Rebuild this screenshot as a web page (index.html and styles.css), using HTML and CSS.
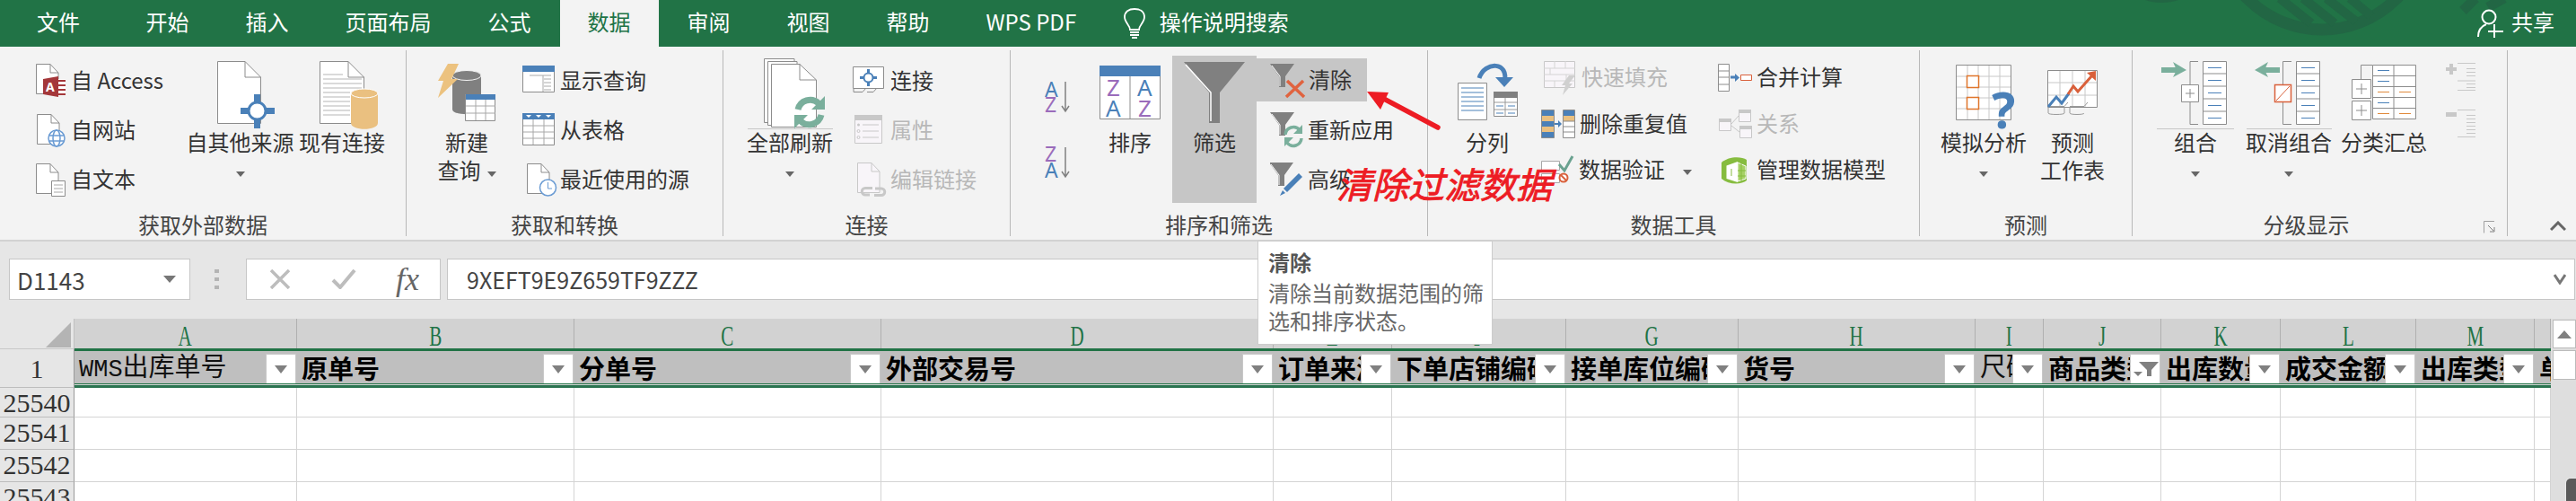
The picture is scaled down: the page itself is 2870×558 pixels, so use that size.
FILE: index.html
```html
<!DOCTYPE html>
<html lang="zh-CN">
<head>
<meta charset="utf-8">
<title>数据 - 筛选</title>
<link rel="stylesheet" href="styles.css">
</head>
<body>
<div class="app">
  <header class="topbar">
    <svg class="deco" width="2870" height="52" viewBox="0 0 2870 52">
      <circle cx="2587" cy="-84" r="117" fill="none" stroke="#226644" stroke-width="13"/>
      <path d="M2540 -2L2575 26M2566 -2L2601 26M2592 -2L2625 24M2618 -2L2642 18" stroke="#226644" stroke-width="10" fill="none"/>
      <path d="M2390 0C2400 4 2416 4 2427 0Z" fill="#226644"/>
      <path d="M2744 12L2758 -2M2772 8L2790 -2" stroke="#226644" stroke-width="11" fill="none"/>
    </svg>
    <nav class="tabs">
      <span class="tab first">文件</span><span class="tab">开始</span><span class="tab">插入</span><span class="tab">页面布局</span><span class="tab">公式</span><span class="tab on">数据</span><span class="tab">审阅</span><span class="tab">视图</span><span class="tab">帮助</span><span class="tab">WPS PDF</span>
      <span class="search">
        <svg width="26" height="34" viewBox="0 0 26 34"><path d="M8 24C8 19 2 16 2 10C2 4 6.500 1 13 1C19.500 1 24 4 24 10C24 16 18 19 18 24Z" fill="none" stroke="#fff" stroke-width="1.800"/><path d="M8 27H18M8 30H18" stroke="#fff" stroke-width="2"/><path d="M10 33H16" stroke="#fff" stroke-width="2"/></svg>
        <span>操作说明搜索</span>
      </span>
    </nav>
    <div class="share">
      <svg width="30" height="32" viewBox="0 0 30 32"><circle cx="13" cy="9" r="7.500" fill="none" stroke="#fff" stroke-width="2"/><path d="M1 31C1 23 5 19 10 17" fill="none" stroke="#fff" stroke-width="2"/><path d="M19 17V32M12 25H29" stroke="#fff" stroke-width="2"/></svg>
      <span>共享</span>
    </div>
  </header>

  <section class="ribbon">
    <!-- 获取外部数据 -->
    <div class="grp g1">
      <div class="body">
        <div class="stack s1">
          <div class="r"><svg width="39" height="40" viewBox="40 70 39 40"><path class="doc" d="M40.500 71.500H56L65 81V104.500H40.500Z"/><path class="fold" d="M56 71.500V81H65"/><path d="M60 88H73V106H60Z" fill="#fff"/><path d="M62 90H73M62 95H73M62 100H73M62 105H73" stroke="#a4373a" stroke-width="2"/><path d="M48 88L65 85V108L48 105Z" fill="#a4373a"/><text class="ti" x="51" y="102" font-size="14" fill="#fff">A</text></svg><span>自 Access</span></div>
          <div class="r"><svg width="39" height="40" viewBox="40 125 39 40"><path class="doc" d="M41.500 127.500H57L66 137V160.500H41.500Z"/><path class="fold" d="M57 127.500V137H66"/><circle cx="63" cy="154" r="9" fill="#fff" stroke="#6a9bd3" stroke-width="1.500"/><ellipse cx="63" cy="154" rx="4" ry="9" fill="none" stroke="#6a9bd3" stroke-width="1.500"/><path d="M54 151H72M54 157H72" stroke="#6a9bd3" stroke-width="1.500"/></svg><span>自网站</span></div>
          <div class="r"><svg width="39" height="40" viewBox="40 180 39 40"><path class="doc" d="M40.500 182.500H56L65 192V215.500H40.500Z"/><path class="fold" d="M56 182.500V192H65"/><path class="doc" d="M57.500 201.500H72.500V218.500H57.500Z"/><path d="M60 206H70M60 210H70M60 214H70" stroke="#a8a8a8"/></svg><span>自文本</span></div>
        </div>
        <div class="big w125">
          <svg width="125" height="88" viewBox="205 56 125 88"><path class="doc" d="M242.500 68.500H273L290.500 86V137.500H242.500Z"/><path class="fold" d="M273 68.500V86H290.500"/><path d="M283 105H290V143H283ZM268 120H306V127H268Z" fill="#4a80b8"/><circle cx="286.500" cy="123.500" r="9.500" fill="#fff" stroke="#4a80b8" stroke-width="3"/></svg>
          <div class="lb">自其他来源</div><div class="lb"><i class="car"></i></div>
        </div>
        <div class="big w100 m1">
          <svg width="100" height="88" viewBox="331 56 100 88"><path class="doc" d="M356.500 68.500H388L405.500 86V137.500H356.500Z"/><path class="fold" d="M388 68.500V86H405.500"/><path d="M360 83H382M360 88H403M360 93H403M360 98H403M360 103H390M360 108H390M360 113H390M360 118H390M360 123H390M360 128H390" stroke="#b5b5b5"/><path d="M391 104V137C391 146 421 146 421 137V104Z" fill="#eac080"/><ellipse cx="406" cy="104" rx="15" ry="5" fill="#eac080" stroke="#fff"/></svg>
          <div class="lb">现有连接</div>
        </div>
      </div>
      <div class="cap">获取外部数据</div>
    </div>

    <!-- 获取和转换 -->
    <div class="grp g2">
      <div class="body">
        <div class="big w90 m22">
          <svg width="90" height="88" viewBox="475 56 90 88"><path d="M504 84V122C504 129 536 129 536 122V84Z" fill="#808080"/><ellipse cx="520" cy="84" rx="16" ry="5.500" fill="#808080" stroke="#f3f3f3"/><path d="M499 71H511L503 88H510L488 109L494 90H488Z" fill="#ecc27f"/><path d="M518.500 105.500H551.500V134.500H518.500Z" fill="#fff" stroke="#8c8c8c"/><path d="M519 105H552V111H519Z" fill="#4a80b8"/><path d="M530 111V134M541 111V134M519 118H552M519 126H552" stroke="#a8a8a8"/></svg>
          <div class="lb">新建</div><div class="lb">查询<i class="car ml"></i></div>
        </div>
        <div class="stack s2">
          <div class="r"><svg width="42" height="40" viewBox="582 70 42 40"><path d="M582.500 73.500H617.500V102.500H582.500Z" fill="#fff" stroke="#8c8c8c"/><path d="M582 73H618V80H582Z" fill="#4a80b8"/><path d="M590 84H614M606 88H614M606 92H614M606 96H614M606 100H614M605 84V102" stroke="#aaa"/></svg><span>显示查询</span></div>
          <div class="r"><svg width="42" height="40" viewBox="582 125 42 40"><path d="M582.500 126.500H617.500V161.500H582.500Z" fill="#fff" stroke="#8c8c8c"/><path d="M582 126H618V133H582Z" fill="#4a80b8"/><path d="M586 128H592L589 131ZM597 128H603L600 131ZM608 128H614L611 131Z" fill="#fff"/><path d="M594 133V161M606 133V161M583 140H617M583 147H617M583 154H617" stroke="#a8a8a8"/></svg><span>从表格</span></div>
          <div class="r"><svg width="42" height="40" viewBox="582 180 42 40"><path class="doc" d="M587.500 182.500H603L612 192V215.500H587.500Z"/><path class="fold" d="M603 182.500V192H612"/><circle cx="610.500" cy="209" r="9" fill="#fff" stroke="#6a9bd3" stroke-width="1.500"/><path d="M610.500 203V210H615" fill="none" stroke="#6a9bd3"/></svg><span>最近使用的源</span></div>
        </div>
      </div>
      <div class="cap">获取和转换</div>
    </div>

    <!-- 连接 -->
    <div class="grp g3">
      <div class="body">
        <div class="big w100 m24">
          <svg width="100" height="88" viewBox="830 56 100 88"><path class="doc" d="M851.500 65.500H885V136.500H851.500Z"/><path class="doc" d="M855.500 68.500H888V139.500H855.500Z"/><path class="doc" d="M859.500 71.500H891L909.500 89V141.500H859.500Z"/><path class="fold" d="M891 71.500V89H909.500"/><g fill="none" stroke="#7aaf9c" stroke-width="7"><path d="M889 122A14 14 0 0 1 912 115"/><path d="M915 128A14 14 0 0 1 892 135"/></g><path d="M919 107V122H904ZM885 143V128H900Z" fill="#7aaf9c"/><path d="M833 143.500H928" stroke="#c6c6c6"/></svg>
          <div class="lb">全部刷新</div><div class="lb"><i class="car"></i></div>
        </div>
        <div class="stack s3">
          <div class="r"><svg width="42" height="40" viewBox="950 70 42 40"><path d="M950.500 74.500H984.500V98.500H950.500Z" fill="#fff" stroke="#8c8c8c"/><path d="M954 102.500H961L965 98M966 102.500H973L977 98M951 99V102.500H954" fill="none" stroke="#8c8c8c"/><path d="M966 77H969V96H966ZM958 85H977V88H958Z" fill="#4a80b8"/><circle cx="967.500" cy="86.500" r="5" fill="#fff" stroke="#4a80b8" stroke-width="2"/></svg><span>连接</span></div>
          <div class="r dis"><svg width="42" height="40" viewBox="950 125 42 40"><path d="M952.500 128.500H982.500V159.500H952.500Z" fill="#f8f5f9" stroke="#c8c8c8"/><path d="M952 128H983V134H952Z" fill="#c8c8c8"/><path d="M961 139H979M961 146H979M961 153H979" stroke="#c8c8c8"/><circle cx="956.500" cy="139" r="1.500" fill="#c8c8c8"/><circle cx="956.500" cy="146" r="1.500" fill="none" stroke="#c8c8c8"/><circle cx="956.500" cy="153" r="1.500" fill="none" stroke="#c8c8c8"/></svg><span>属性</span></div>
          <div class="r dis"><svg width="42" height="40" viewBox="950 180 42 40"><path d="M955.500 181.500H971L980 191V214.500H955.500Z" fill="#f8f5f9" stroke="#c8c8c8"/><path d="M971 181.500V191H980" fill="none" stroke="#c8c8c8"/><path d="M969 217H964A3.500 3.500 0 0 1 964 209.500H972M975 210H982A3.500 3.500 0 0 1 982 217.500H974" fill="none" stroke="#c8c8c8" stroke-width="3"/></svg><span>编辑链接</span></div>
        </div>
      </div>
      <div class="cap">连接</div>
    </div>

    <!-- 排序和筛选 -->
    <div class="grp g4">
      <div class="body">
        <div class="sorts">
          <svg width="30" height="36" viewBox="1164 90 30 36"><text class="tt" x="1164" y="108" font-size="23" fill="#4a80b8">A</text><text class="tt" x="1164" y="125" font-size="23" fill="#9a6cbb">Z</text><path d="M1187 91V123M1183 118L1187 124L1191 118" fill="none" stroke="#808080" stroke-width="1.500"/></svg>
          <svg width="30" height="36" viewBox="1164 163 30 36"><text class="tt" x="1164" y="180" font-size="23" fill="#9a6cbb">Z</text><text class="tt" x="1164" y="198" font-size="23" fill="#4a80b8">A</text><path d="M1187 164V196M1183 191L1187 197L1191 191" fill="none" stroke="#808080" stroke-width="1.500"/></svg>
        </div>
        <div class="big w80 m15">
          <svg width="80" height="88" viewBox="1219 56 80 88"><path d="M1225.500 73.500H1292.500V132.500H1225.500Z" fill="#fff" stroke="#8c8c8c"/><path d="M1225 73H1293V85H1225Z" fill="#4a80b8"/><path d="M1259 85V133" stroke="#8c8c8c"/><text class="tt" x="1233" y="107" font-size="26" fill="#9a6cbb">Z</text><text class="tt" x="1267" y="107" font-size="26" fill="#4a80b8">A</text><text class="tt" x="1232" y="130" font-size="26" fill="#4a80b8">A</text><text class="tt" x="1268" y="130" font-size="26" fill="#9a6cbb">Z</text></svg>
          <div class="lb">排序</div>
        </div>
        <div class="big filter">
          <svg width="94" height="82" viewBox="1306 62 94 82"><path d="M1319 69H1387L1359 103V137H1347V103Z" fill="#808080"/><path d="M1321 72L1349 103V135" fill="none" stroke="#fff" stroke-width="1.500"/></svg>
          <div class="lb">筛选</div>
        </div>
        <div class="stack s4">
          <div class="r hl"><svg width="43" height="44" viewBox="1415 67 43 44"><path d="M1415 71H1442L1432 85V97H1425V85Z" fill="#808080"/><path d="M1417 73L1426 85V96" fill="none" stroke="#fff"/><path d="M1433 108L1452 90M1434 90L1453 108" stroke="#e0633f" stroke-width="3.500" fill="none"/></svg><span>清除</span></div>
          <div class="r"><svg width="42" height="44" viewBox="1416 125 42 44"><path d="M1416 127H1443L1433 141V153H1426V141Z" fill="#808080"/><path d="M1418 129L1427 141V152" fill="none" stroke="#fff"/><g fill="none" stroke="#7aaf9c" stroke-width="3.500"><path d="M1433 152A9 9 0 0 1 1449 147"/><path d="M1451 156A9 9 0 0 1 1435 161"/></g><path d="M1452 141V151H1442ZM1432 165V155H1442Z" fill="#7aaf9c"/></svg><span>重新应用</span></div>
          <div class="r"><svg width="42" height="44" viewBox="1416 178 42 44"><path d="M1415 181H1442L1432 195V207H1425V195Z" fill="#808080"/><path d="M1417 183L1426 195V206" fill="none" stroke="#fff"/><path d="M1431 210L1448 193L1452 197L1435 214Z" fill="#4a80b8"/><path d="M1430 212L1433 215L1427 218Z" fill="#4a80b8"/></svg><span>高级</span></div>
        </div>
      </div>
      <div class="cap">排序和筛选</div>
    </div>

    <!-- 数据工具 -->
    <div class="grp g5">
      <div class="body">
        <div class="big w90 m21">
          <svg width="90" height="88" viewBox="1612 56 90 88"><path d="M1648 87C1654 68 1682 68 1676 92" fill="none" stroke="#4a80b8" stroke-width="5"/><path d="M1666 86H1686L1676 97Z" fill="#4a80b8"/><path d="M1624.500 92.500H1656.500V133.500H1624.500Z" fill="#fff" stroke="#8c8c8c"/><path d="M1628 98H1653M1628 103H1653M1628 108H1653M1628 113H1653M1628 118H1653M1628 123H1653" stroke="#4a80b8"/><path d="M1664.500 102.500H1690.500V129.500H1664.500Z" fill="#fff" stroke="#8c8c8c"/><path d="M1664 102H1691V109H1664Z" fill="#808080"/><path d="M1677 109V130M1665 114H1690M1665 122H1690" stroke="#9a9a9a"/><path d="M1667 118H1675M1680 118H1688M1667 126H1675M1680 126H1688" stroke="#4a80b8"/></svg>
          <div class="lb">分列</div>
        </div>
        <div class="stack s5">
          <div class="r dis"><svg width="45" height="44" viewBox="1717 65 45 44"><path d="M1720.500 68.500H1754.500V97.500H1720.500Z" fill="#f8f5f9" stroke="#c8c8c8"/><path d="M1720 76H1755M1720 83H1755M1720 90H1755M1732 68V76M1744 68V76M1727 76V83M1745 83V90M1732 90V97" stroke="#d4d4d4"/><path d="M1748 84H1755L1748 93H1752L1741 106L1744 95H1740Z" fill="#d0d0d0"/></svg><span>快速填充</span></div>
          <div class="r"><svg width="43" height="36" viewBox="1719 120 43 36"><path d="M1719.500 122.500H1733.500V153.500H1719.500Z" fill="#4a80b8" stroke="#8c8c8c"/><path d="M1720 129H1733V135H1720ZM1720 141H1733V147H1720Z" fill="#eac080"/><path d="M1743.500 122.500H1756.500V153.500H1743.500Z" fill="#fff" stroke="#8c8c8c"/><path d="M1744 123H1756V129H1744Z" fill="#4a80b8"/><path d="M1744 129H1756V135H1744Z" fill="#eac080"/><path d="M1744 135H1756M1744 141H1756M1744 147H1756" stroke="#8c8c8c"/><path d="M1734 138H1739" stroke="#4a80b8" stroke-width="2"/><path d="M1738 134L1742 138L1738 142Z" fill="#4a80b8"/></svg><span>删除重复值</span></div>
          <div class="r"><svg width="42" height="40" viewBox="1717 170 42 40"><path d="M1717.500 179.500H1737.500V189.500H1717.500Z" fill="#fff" stroke="#a8a8a8"/><path d="M1717.500 193.500H1737.500V203.500H1717.500Z" fill="#fff" stroke="#a8a8a8"/><path d="M1737 183L1743 190L1752 174" fill="none" stroke="#6aa290" stroke-width="3"/><circle cx="1742" cy="198" r="4.500" fill="#fff" stroke="#d9603b" stroke-width="2"/><path d="M1739 195L1745 201" stroke="#d9603b" stroke-width="2"/></svg><span>数据验证</span><i class="car ml2"></i></div>
        </div>
        <div class="stack s5b">
          <div class="r"><svg width="43" height="36" viewBox="1914 68 43 36"><path d="M1914.500 70.500H1926.500V100.500H1914.500Z" fill="#fff" stroke="#8c8c8c"/><path d="M1915 78H1926M1915 85H1926M1915 93H1926" stroke="#8c8c8c"/><path d="M1928 85H1934" stroke="#4a80b8" stroke-width="3"/><path d="M1933 81L1938 85.500L1933 90Z" fill="#4a80b8"/><path d="M1939.500 82.500H1951.500V88.500H1939.500Z" fill="#fff" stroke="#d9603b"/></svg><span>合并计算</span></div>
          <div class="r dis"><svg width="43" height="36" viewBox="1914 118 43 36"><path d="M1915.500 130.500H1928.500V143.500H1915.500ZM1937.500 120.500H1950.500V133.500H1937.500ZM1938.500 138.500H1951.500V151.500H1938.500Z" fill="#f8f5f9" stroke="#c8c8c8"/><path d="M1915 130H1929V134H1915ZM1937 120H1951V124H1937ZM1938 138H1952V142H1938Z" fill="#c8c8c8"/><path d="M1929 136L1937 127M1929 138L1938 145" stroke="#c8c8c8" fill="none"/></svg><span>关系</span></div>
          <div class="r"><svg width="43" height="36" viewBox="1914 172 43 36"><path d="M1918 181C1926 174 1940 174 1946 178V201C1940 206 1926 206 1918 199Z" fill="#86bc3f"/><path d="M1923.500 184.500L1936 180V203L1923.500 199Z" fill="#fff"/><path d="M1936 181L1945 185V199L1936 202Z" fill="#a6d166" stroke="#fff"/><path d="M1929 188V196M1940 182V201M1936 190H1945M1936 196H1945" stroke="#86bc3f"/></svg><span>管理数据模型</span></div>
        </div>
      </div>
      <div class="cap">数据工具</div>
    </div>

    <!-- 预测 -->
    <div class="grp g6">
      <div class="body">
        <div class="big w100 m21">
          <svg width="100" height="88" viewBox="2160 56 100 88"><path d="M2179.500 72.500H2240.500V133.500H2179.500Z" fill="#fff" stroke="#8c8c8c"/><path d="M2192 73V133M2204 73V133M2216 73V133M2228 73V133M2180 85H2240M2180 97H2240M2180 109H2240M2180 121H2240" stroke="#c8c8c8"/><path d="M2191.500 84.500H2204.500V97.500H2191.500ZM2191.500 108.500H2204.500V121.500H2191.500Z" fill="#fff" stroke="#e0762c" stroke-width="1.500"/><text class="qm" x="2219" y="143" font-size="55" fill="#4a80b8">?</text></svg>
          <div class="lb">模拟分析</div><div class="lb"><i class="car"></i></div>
        </div>
        <div class="big w80 m9">
          <svg width="80" height="88" viewBox="2269 56 80 88"><path d="M2281.500 78.500H2336.500V119.500H2281.500Z" fill="#fff" stroke="#8c8c8c"/><path d="M2295 79V119M2309 79V119M2323 79V119M2282 92H2336M2282 106H2336" stroke="#c8c8c8"/><path d="M2284 118.500H2300L2304 114M2306 118.500H2322L2326 114M2282 119V126C2282 128 2300 128 2300 126L2300 119M2306 119V126C2306 128 2322 128 2322 126" fill="none" stroke="#9a9a9a"/><path d="M2282 119L2291 108L2297 115L2305 104" fill="none" stroke="#4a80b8" stroke-width="3"/><path d="M2304 105L2310 96L2315 102L2331 84" fill="none" stroke="#d9603b" stroke-width="3"/><path d="M2325 81L2335 79L2335 90Z" fill="#d9603b"/></svg>
          <div class="lb">预测</div><div class="lb">工作表</div>
        </div>
      </div>
      <div class="cap">预测</div>
    </div>

    <!-- 分级显示 -->
    <div class="grp g7">
      <div class="body">
        <div class="big w86 m27">
          <svg width="86" height="88" viewBox="2403 56 86 88"><path d="M2408 75H2428V81H2408Z" fill="#7aaf9c"/><path d="M2421 69L2436 78L2421 86L2425 78Z" fill="#7aaf9c"/><path d="M2449 68.500H2440V138.500H2449" fill="none" stroke="#8c8c8c"/><path d="M2430.500 94.500H2449.500V113.500H2430.500Z" fill="#fff" stroke="#8c8c8c"/><path d="M2440 99V109M2435 104H2445" stroke="#8c8c8c"/><path d="M2454.500 68.500H2480.500V138.500H2454.500Z" fill="#fff" stroke="#8c8c8c"/><path d="M2455 82H2480M2455 96H2480M2455 110H2480M2455 124H2480" stroke="#8c8c8c"/><path d="M2460 75.500H2475M2460 89.500H2475M2460 103.500H2475M2460 117.500H2475M2460 131.500H2475" stroke="#4a80b8"/><path d="M2403 143.500H2489" stroke="#c6c6c6"/></svg>
          <div class="lb">组合</div><div class="lb"><i class="car"></i></div>
        </div>
        <div class="big w96 m13">
          <svg width="96" height="88" viewBox="2502 56 96 88"><path d="M2520 75H2540V81H2520Z" fill="#7aaf9c"/><path d="M2527 69L2512 78L2527 86L2523 78Z" fill="#7aaf9c"/><path d="M2553 68.500H2543.500V138.500H2553" fill="none" stroke="#8c8c8c"/><path d="M2534.500 94.500H2552.500V113.500H2534.500Z" fill="#fff" stroke="#d9603b" stroke-width="1.500"/><path d="M2536 112L2551 96" stroke="#d9603b"/><path d="M2558.500 68.500H2584.500V138.500H2558.500Z" fill="#fff" stroke="#8c8c8c"/><path d="M2559 82H2584M2559 96H2584M2559 110H2584M2559 124H2584" stroke="#8c8c8c"/><path d="M2564 75.500H2579M2564 89.500H2579M2564 103.500H2579M2564 117.500H2579M2564 131.500H2579" stroke="#4a80b8"/><path d="M2503 143.500H2598" stroke="#c6c6c6"/></svg>
          <div class="lb">取消组合</div><div class="lb"><i class="car"></i></div>
        </div>
        <div class="big w96 m10">
          <svg width="96" height="88" viewBox="2608 56 96 88"><path d="M2643 72.500H2630.500V88" fill="none" stroke="#8c8c8c"/><path d="M2620.500 88.500H2641.500V109.500H2620.500ZM2620.500 112.500H2641.500V133.500H2620.500Z" fill="#fff" stroke="#8c8c8c"/><path d="M2631 93V105M2625 99H2637M2631 117V129M2625 123H2637" stroke="#8c8c8c"/><path d="M2643.500 72.500H2691.500V132.500H2643.500Z" fill="#fff" stroke="#8c8c8c"/><path d="M2667 73V132M2644 84.500H2691M2644 96.500H2691M2644 108.500H2691M2644 120.500H2691" stroke="#8c8c8c"/><path d="M2649 78.500H2662M2649 90.500H2662M2649 114.500H2662" stroke="#4a80b8"/><path d="M2649 102.500H2662M2673 102.500H2686M2649 126.500H2662M2673 126.500H2686" stroke="#e08a3c"/></svg>
          <div class="lb">分类汇总</div>
        </div>
        <svg class="detail" width="34" height="110" viewBox="2725 56 34 110"><path d="M2729 71H2733V75H2737V79H2733V83H2729V79H2725V75H2729Z" fill="#c8c8c8"/><path d="M2738 70.500H2758M2748 76.500H2758M2748 80.500H2758M2748 84.500H2758M2738 90H2758M2748 93.500H2758M2748 97.500H2758M2738 100.500H2758" stroke="#c8c8c8"/><path d="M2725 125H2737V130H2725Z" fill="#c8c8c8"/><path d="M2738 122.500H2758M2748 128.500H2758M2748 132.500H2758M2748 136.500H2758M2748 140.500H2758M2748 144.500H2758M2748 148.500H2758M2738 152.500H2758" stroke="#c8c8c8"/></svg>
      </div>
      <div class="cap capx"><span>分级显示</span><svg width="13" height="14" viewBox="0 0 13 14"><path d="M.500 13.500V.500H12" fill="none" stroke="#a0a0a0"/><path d="M5 5L11 11M12 7V12H7" fill="none" stroke="#808080"/></svg></div>
    </div>

    <div class="grp g8">
      <div class="body"></div>
      <div class="cap capc"><svg width="18" height="12" viewBox="0 0 18 12"><path d="M1 10L9 2L17 10" fill="none" stroke="#666" stroke-width="3"/></svg></div>
    </div>
  </section>

  <section class="fbar">
    <div class="fname"><span>D1143</span><i class="car lg"></i></div>
    <svg class="fdots" width="6" height="22" viewBox="0 0 6 22"><path d="M0 0H5V4H0ZM0 9H5V13H0ZM0 18H5V22H0Z" fill="#b4b4b4"/></svg>
    <div class="fbtns">
      <svg width="24" height="22" viewBox="0 0 24 22"><path d="M2 1L22 21M22 1L2 21" stroke="#bdbdbd" stroke-width="3.500"/></svg>
      <svg width="28" height="22" viewBox="0 0 28 22"><path d="M2 12L10 20L26 1" fill="none" stroke="#bdbdbd" stroke-width="4"/></svg>
      <span class="fx">fx</span>
    </div>
    <div class="finput"><span>9XEFT9E9Z659TF9ZZZ</span><svg width="14" height="12" viewBox="0 0 14 12"><path d="M1 1L7 10L13 1" fill="none" stroke="#777" stroke-width="3"/></svg></div>
  </section>

  <section class="sheet">
    <div class="grid">
      <div class="corner"><svg width="30" height="30" viewBox="0 0 30 30"><path d="M29 1V29H1Z" fill="#b4b4b4"/></svg></div>
      <div class="ch"><span>A</span></div><div class="ch"><span>B</span></div><div class="ch"><span>C</span></div><div class="ch"><span>D</span></div><div class="ch"><span>E</span></div><div class="ch"><span>F</span></div><div class="ch"><span>G</span></div><div class="ch"><span>H</span></div><div class="ch"><span>I</span></div><div class="ch"><span>J</span></div><div class="ch"><span>K</span></div><div class="ch"><span>L</span></div><div class="ch"><span>M</span></div><div class="ch"></div>

      <div class="rh rh1">1</div>
      <div class="gl"></div>
      <div class="h"><span class="t serif"><b>WMS</b>出库单号</span><i class="fb"></i></div>
      <div class="h"><span class="t">原单号</span><i class="fb"></i></div>
      <div class="h"><span class="t">分单号</span><i class="fb"></i></div>
      <div class="h"><span class="t">外部交易号</span><i class="fb"></i></div>
      <div class="h"><span class="t">订单来源</span><i class="fb"></i></div>
      <div class="h"><span class="t">下单店铺编码</span><i class="fb"></i></div>
      <div class="h"><span class="t">接单库位编码</span><i class="fb"></i></div>
      <div class="h"><span class="t">货号</span><i class="fb"></i></div>
      <div class="h"><span class="t serif">尺码</span><i class="fb"></i></div>
      <div class="h"><span class="t">商品类型</span><i class="fb on"><svg width="30" height="16" viewBox="0 0 30 16"><path d="M8 0H30L22 9V16H17V9Z" fill="#808080"/><path d="M2 11H12L7 16Z" fill="#808080"/></svg></i></div>
      <div class="h"><span class="t">出库数量</span><i class="fb"></i></div>
      <div class="h"><span class="t">成交金额</span><i class="fb"></i></div>
      <div class="h"><span class="t">出库类型</span><i class="fb"></i></div>
      <div class="h"><span class="t">单</span></div>
      <div class="fl"></div>

      <div class="rh">25540</div><div class="c"></div><div class="c"></div><div class="c"></div><div class="c"></div><div class="c"></div><div class="c"></div><div class="c"></div><div class="c"></div><div class="c"></div><div class="c"></div><div class="c"></div><div class="c"></div><div class="c"></div><div class="c"></div>
      <div class="rh">25541</div><div class="c"></div><div class="c"></div><div class="c"></div><div class="c"></div><div class="c"></div><div class="c"></div><div class="c"></div><div class="c"></div><div class="c"></div><div class="c"></div><div class="c"></div><div class="c"></div><div class="c"></div><div class="c"></div>
      <div class="rh">25542</div><div class="c"></div><div class="c"></div><div class="c"></div><div class="c"></div><div class="c"></div><div class="c"></div><div class="c"></div><div class="c"></div><div class="c"></div><div class="c"></div><div class="c"></div><div class="c"></div><div class="c"></div><div class="c"></div>
      <div class="rh">25543</div><div class="c"></div><div class="c"></div><div class="c"></div><div class="c"></div><div class="c"></div><div class="c"></div><div class="c"></div><div class="c"></div><div class="c"></div><div class="c"></div><div class="c"></div><div class="c"></div><div class="c"></div><div class="c"></div>
    </div>
    <aside class="vscroll">
      <div class="sbtn"><svg width="16" height="9" viewBox="0 0 16 9"><path d="M8 0L16 9H0Z" fill="#808080"/></svg></div>
      <div class="thumb"></div>
      <i class="blob"></i>
    </aside>
  </section>

  <svg class="redarrow" width="90" height="50" viewBox="1520 98 90 50"><path d="M1602 142L1538 108" stroke="#ed1c24" stroke-width="5.500" stroke-linecap="round"/><path d="M1523 102L1547 103L1538 122Z" fill="#ed1c24"/></svg>
  <div class="note">清除过滤数据</div>
  <div class="tip">
    <div class="tip-t">清除</div>
    <p>清除当前数据范围的筛选和排序状态。</p>
  </div>
</div>
</body>
</html>
```
FILE: styles.css
```css
* { box-sizing: border-box; }
html, body { margin: 0; padding: 0; background: #fff; }
body { font-family: "Noto Sans CJK SC", "Noto Sans", sans-serif; font-size: 24px; color: #333; overflow: hidden; }
svg { display: block; flex: none; }
i { font-style: normal; }
.app { position: relative; width: 2870px; height: 558px; overflow: hidden; }

/* title tabs */
.topbar { position: relative; height: 52px; background: #217346; display: flex; align-items: stretch; color: #fff; }
.deco { position: absolute; left: 0; top: 0; }
.tabs { position: relative; display: flex; align-items: stretch; }
.tab { display: flex; align-items: center; padding: 0 31px 5px; margin: 0 .5px; white-space: nowrap; }
.tab.first { padding: 0 42px 5px 41px; margin: 0; }
.tab.on { background: #f3f3f3; color: #217346; }
.search { display: flex; align-items: center; gap: 15px; margin-left: 20px; white-space: nowrap; }
.search span { margin-bottom: 5px; }
.share { position: relative; margin-left: auto; display: flex; align-items: center; gap: 8px; padding-right: 24px; }
.share span { margin-bottom: 5px; }

/* ribbon */
.ribbon { display: flex; height: 217px; padding-top: 4px; background: #f3f3f3; border-bottom: 2px solid #d2d2d2; }
.grp { flex: none; height: 207px; display: flex; flex-direction: column; border-right: 1px solid #b8b8b8; }
.g1 { width: 453px; } .g2 { width: 353px; } .g3 { width: 320px; } .g4 { width: 465px; }
.g5 { width: 548px; } .g6 { width: 237px; } .g7 { width: 418px; } .g8 { width: 76px; border-right: 0; }
.body { height: 180px; display: flex; flex: none; }
.cap { height: 27px; line-height: 27px; text-align: center; color: #444; white-space: nowrap; }
.capx { display: flex; align-items: center; }
.capx span { width: 387px; }
.capx svg { margin: 6px 0 0 4px; }
.capc { display: flex; align-items: center; padding-left: 47px; }
.capc svg { margin-top: 4px; }

.stack { flex: none; padding-top: 6.5px; }
.r { display: flex; align-items: center; height: 55px; white-space: nowrap; }
.r span { margin-bottom: 4px; }
.r.dis { color: #b8b8b8; }
.s1 { width: 205px; padding-left: 40px; }
.s2 { margin-left: 17px; }
.s3 { margin-left: 20px; }
.s4 { padding-top: 9px; width: 140px; }
.s4 .r { padding-left: 15px; }
.s4 .hl { width: 123px; height: 48px; margin-bottom: 4.5px; background: #c6c6c6; }
.s5 { width: 197px; margin-left: 15px; padding-top: 5px; }
.s5b { padding-top: 5px; }
.s5 .r, .s5b .r { height: 51.5px; }
.sorts { flex: none; display: flex; flex-direction: column; gap: 37px; margin-left: 38px; padding-top: 34px; width: 40px; }

.big { flex: none; display: flex; flex-direction: column; align-items: center; }
.big svg { margin-bottom: -2px; }
.lb { height: 31px; line-height: 31px; white-space: nowrap; text-align: center; }
.w80 { width: 80px; } .w86 { width: 86px; } .w90 { width: 90px; } .w96 { width: 96px; } .w100 { width: 100px; } .w125 { width: 125px; }
.m1 { margin-left: 1px; } .m9 { margin-left: 9px; } .m10 { margin-left: 10px; } .m13 { margin-left: 13px; } .m15 { margin-left: 15px; }
.m21 { margin-left: 21px; } .m22 { margin-left: 22px; } .m24 { margin-left: 24px; } .m27 { margin-left: 27px; }
.filter { width: 94px; height: 164px; margin: 6px 0 0 7px; background: #c6c6c6; }
.detail { margin-left: 21px; }

.car { display: inline-block; width: 0; height: 0; margin-top: 4px; border-left: 5.5px solid transparent; border-right: 5.5px solid transparent; border-top: 6px solid #666; vertical-align: middle; }
.car.ml { margin-left: 7px; }
.car.ml2 { margin-left: 20px; }
.car.lg { margin-top: 0; border-left-width: 7px; border-right-width: 7px; border-top-width: 8px; border-top-color: #777; }

.doc { fill: #fff; stroke: #8c8c8c; stroke-width: 1; }
.fold { fill: none; stroke: #8c8c8c; stroke-width: 1; }
.tt { font-family: "Noto Sans", sans-serif; }
.ti { font-family: "Noto Sans", sans-serif; font-weight: 700; }
.qm { font-family: "Noto Sans", sans-serif; font-weight: 700; }

/* formula bar */
.fbar { display: flex; height: 86px; padding-top: 19px; background: #e6e6e6; }
.fbar > * { flex: none; }
.fname { width: 202px; height: 46px; margin-left: 10px; padding: 0 15px 0 8px; display: flex; align-items: center; justify-content: space-between; background: #fff; border: 1px solid #c6c6c6; color: #444; font-size: 26px; }
.fdots { margin: 12px 0 0 27px; }
.fbtns { width: 217px; height: 46px; margin-left: 29px; padding: 0 23px 0 25px; display: flex; align-items: center; justify-content: space-between; background: #fff; border: 1px solid #c6c6c6; }
.fx { font: italic 36px/46px "Liberation Serif", serif; color: #666; }
.finput { flex: 1 1 auto; height: 46px; margin: 0 1px 0 7px; padding: 0 9px 0 21px; display: flex; align-items: center; justify-content: space-between; background: #fff; border: 1px solid #c6c6c6; color: #444; }
.finput span { font-family: "Noto Sans CJK SC", sans-serif; font-size: 25px; }

/* sheet */
.sheet { display: flex; height: 203px; overflow: hidden; background: #fff; }
.grid { flex: none; width: 2842px; display: grid; grid-template-columns: 83px 248px 309px 342px 437px 132px 194px 192px 264px 76px 131px 133px 151px 132px 18px; grid-template-rows: 33px 3px 36px 5px 33px 36px 36px 36px; border-right: 1px solid #9a9a9a; }
.corner { background: #e6e6e6; display: flex; justify-content: flex-end; align-items: flex-end; padding: 0 2px 0 0; border-right: 1px solid #c0c0c0; }
.ch { padding-top: 3px; background: #d2d2d2; border-right: 1px solid #b0b0b0; text-align: center; font: 31px/33px "Liberation Serif", serif; color: #217346; overflow: hidden; }
.ch span { display: inline-block; transform: scaleX(.68); }
.rh { background: #e6e6e6; border-right: 1px solid #9a9a9a; border-bottom: 1px solid #bdbdbd; text-align: center; font: 30px/33px "Liberation Serif", serif; color: #333; overflow: hidden; }
.rh1 { grid-row: 2 / span 3; display: flex; align-items: center; justify-content: center; border-top: 1px solid #c8c8c8; }
.gl { grid-column: 2 / -1; background: #217346; }
.h { display: flex; align-items: stretch; min-width: 0; overflow: hidden; background: #bfbfbf; }
.t { flex: 1 1 0; min-width: 0; overflow: hidden; white-space: nowrap; padding-left: 5px; font-size: 29px; font-weight: 700; line-height: 36px; color: #000; }
.t.serif { font-family: "Liberation Serif", "Noto Sans CJK SC", serif; font-weight: 400; font-size: 29px; color: #111; }
.t b { font: 400 27px/36px "Liberation Mono", monospace; }
.fb { flex: none; width: 34px; margin: 3px 1px 0 0; display: flex; align-items: center; justify-content: center; background: #fff; border: 1px solid #c8c8c8; border-bottom: 0; }
.fb::after { content: ""; width: 0; height: 0; border-left: 7px solid transparent; border-right: 7px solid transparent; border-top: 9px solid #808080; }
.fb.on::after { display: none; }
.fl { grid-column: 2 / -1; background: #d8d8d8; border-top: 1px solid #217346; border-bottom: 3px solid #2a7350; }
.c { background: #fff; border-right: 1px solid #d4d4d4; border-bottom: 1px solid #d4d4d4; }

.vscroll { position: relative; flex: 1 1 auto; background: #dedede; padding: 1px 0 0 2px; }
.sbtn { height: 32px; background: #fff; border: 1px solid #bbb; display: flex; align-items: center; justify-content: center; }
.thumb { height: 33px; margin-top: 2px; background: #fff; border: 1px solid #bbb; }
.blob { position: absolute; right: 0; bottom: 0; width: 11px; height: 25px; background: #5a5a5a; border-top-left-radius: 5px; box-shadow: 0 0 0 1px #e8e8e8; }

/* overlays */
.redarrow { position: absolute; left: 1520px; top: 98px; }
.note { position: absolute; left: 1489px; top: 180px; font-size: 40px; line-height: 48px; font-style: italic; font-weight: 400; -webkit-text-stroke: .9px #ed1c24; color: #ed1c24; white-space: nowrap; }
.tip { position: absolute; left: 1401px; top: 268px; width: 262px; height: 116px; padding: 7px 8px 0 11px; background: #fff; border: 1px solid #ccc; color: #666; }
.tip-t { font-weight: 700; color: #555; line-height: 32px; }
.tip p { margin: 2px 0 0; line-height: 31px; }
```
